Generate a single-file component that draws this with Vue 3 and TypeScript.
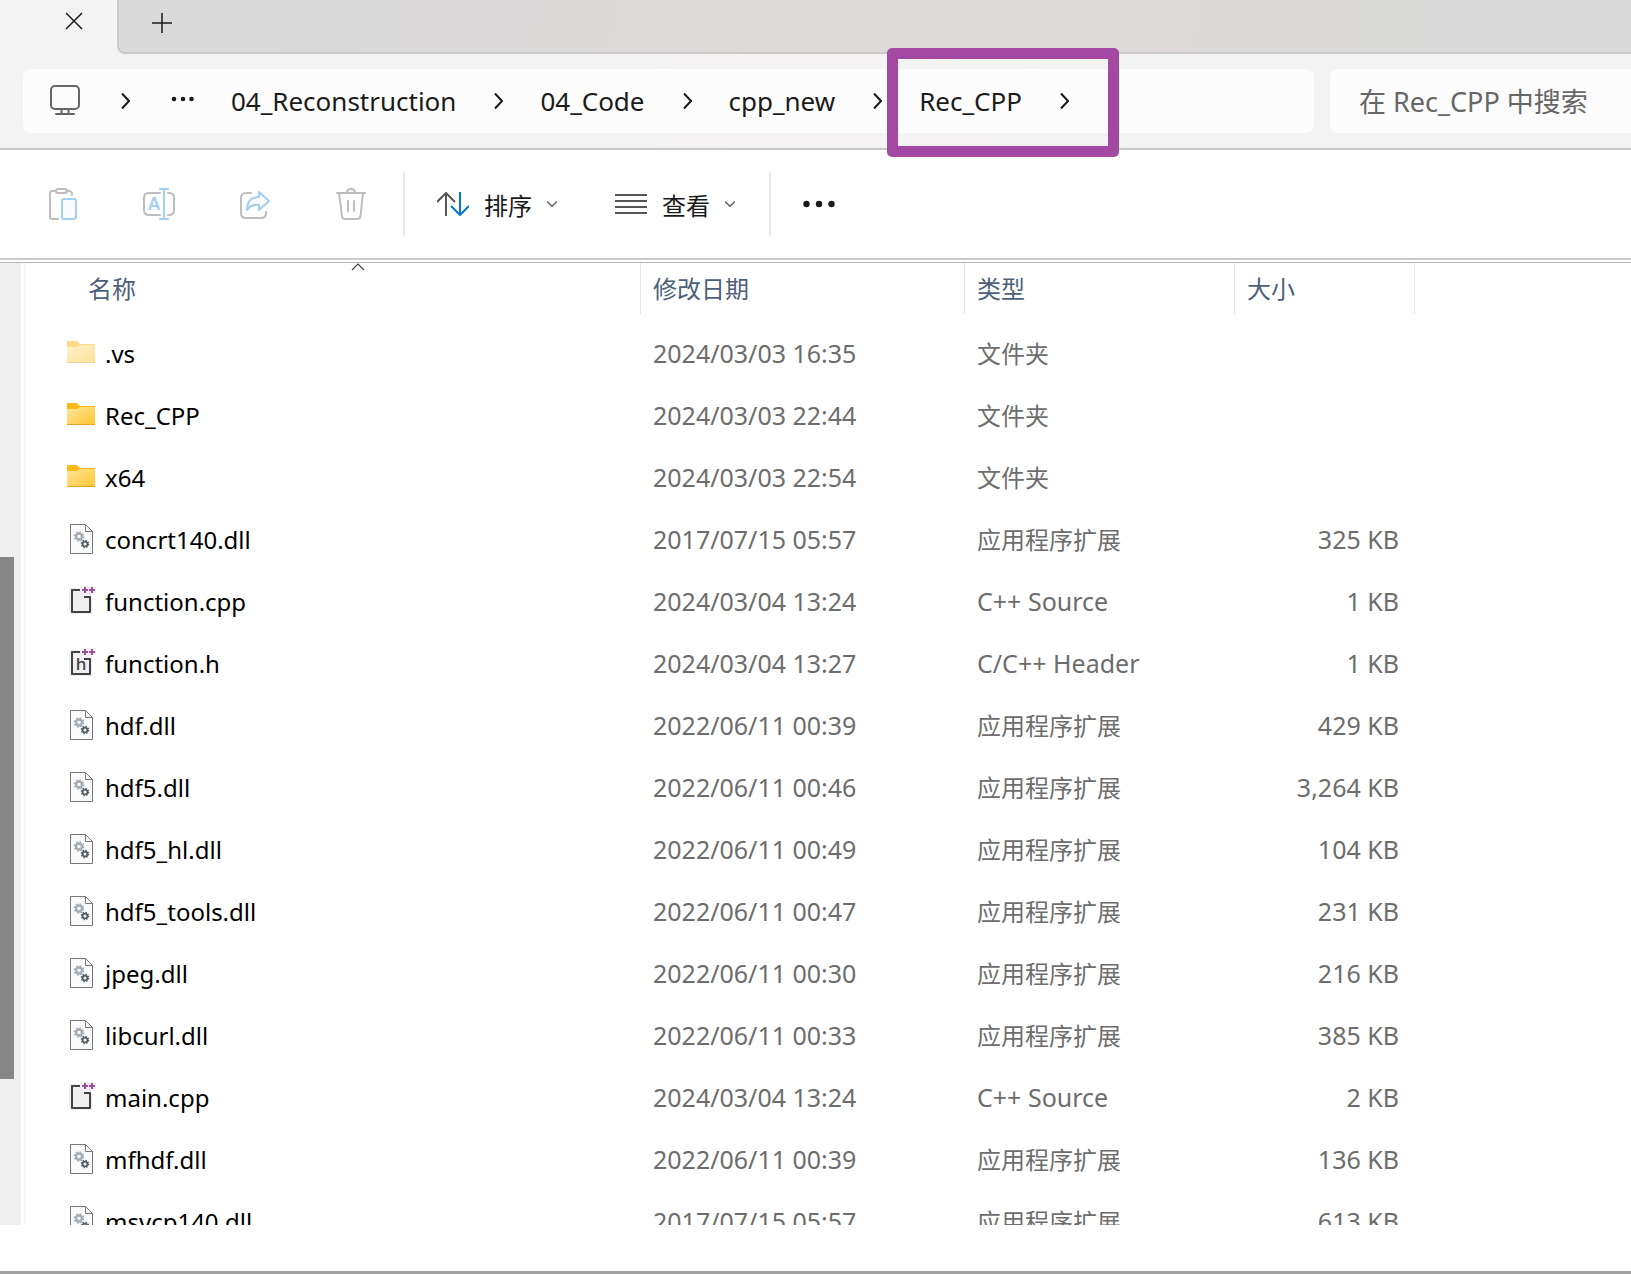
<script setup lang="ts">
type Kind = 'folder-dim' | 'folder' | 'dll' | 'cpp' | 'header'

interface Entry {
  name: string
  date: string
  type: string
  size: string
  kind: Kind
}

const DLL = '应用程序扩展'
const FOLDER = '文件夹'

const crumbs: string[] = ['04_Reconstruction', '04_Code', 'cpp_new', 'Rec_CPP']

const dll = (name: string, date: string, size: string): Entry => ({ name, date, type: DLL, size, kind: 'dll' })

const entries: Entry[] = [
  { name: '.vs', date: '2024/03/03 16:35', type: FOLDER, size: '', kind: 'folder-dim' },
  { name: 'Rec_CPP', date: '2024/03/03 22:44', type: FOLDER, size: '', kind: 'folder' },
  { name: 'x64', date: '2024/03/03 22:54', type: FOLDER, size: '', kind: 'folder' },
  dll('concrt140.dll', '2017/07/15 05:57', '325 KB'),
  { name: 'function.cpp', date: '2024/03/04 13:24', type: 'C++ Source', size: '1 KB', kind: 'cpp' },
  { name: 'function.h', date: '2024/03/04 13:27', type: 'C/C++ Header', size: '1 KB', kind: 'header' },
  dll('hdf.dll', '2022/06/11 00:39', '429 KB'),
  dll('hdf5.dll', '2022/06/11 00:46', '3,264 KB'),
  dll('hdf5_hl.dll', '2022/06/11 00:49', '104 KB'),
  dll('hdf5_tools.dll', '2022/06/11 00:47', '231 KB'),
  dll('jpeg.dll', '2022/06/11 00:30', '216 KB'),
  dll('libcurl.dll', '2022/06/11 00:33', '385 KB'),
  { name: 'main.cpp', date: '2024/03/04 13:24', type: 'C++ Source', size: '2 KB', kind: 'cpp' },
  dll('mfhdf.dll', '2022/06/11 00:39', '136 KB'),
  dll('msvcp140.dll', '2017/07/15 05:57', '613 KB'),
]

const isLatin = (text: string): boolean => /^[A-Z]/.test(text)
</script>

<template>
  <div class="window">
    <header class="tabs">
      <div class="tab">
        <button class="tab-close" aria-label="关闭标签页">
          <svg width="18" height="18" viewBox="0 0 18 18"><path d="M1 1L17 17M17 1L1 17" stroke="#1b1b1b" stroke-width="1.5" /></svg>
        </button>
      </div>
      <div class="strip">
        <button aria-label="添加新标签页">
          <svg width="20" height="20" viewBox="0 0 20 20"><path d="M10 0V20M0 10H20" stroke="#1b1b1b" stroke-width="1.5" /></svg>
        </button>
      </div>
    </header>

    <nav class="nav">
      <ol class="address">
        <li>
          <button aria-label="此电脑">
            <svg width="34" height="32" viewBox="0 0 34 32" fill="none" stroke="#666" stroke-width="2" stroke-linecap="round">
              <rect x="2" y="1" width="28" height="23" rx="4" />
              <path d="M12.500 24V28M19.500 24V28M7 29H25" />
            </svg>
          </button>
          <svg class="chev" width="9" height="18" viewBox="0 0 9 18"><path d="M1 1.500L8 9L1 16.500" /></svg>
        </li>
        <li>
          <button class="more" aria-label="更多路径">
            <svg width="27" height="6" viewBox="1 0 27 6" fill="#1b1b1b"><circle cx="8" cy="3" r="2.300" /><circle cx="17" cy="3" r="2.300" /><circle cx="25.500" cy="3" r="2.300" /></svg>
          </button>
        </li>
        <li v-for="crumb in crumbs" :key="crumb" :class="{ marked: crumb === 'Rec_CPP' }">
          <button>{{ crumb }}</button>
          <svg class="chev" width="9" height="18" viewBox="0 0 9 18"><path d="M1 1.500L8 9L1 16.500" /></svg>
        </li>
      </ol>
      <input class="search" type="text" placeholder="在 Rec_CPP 中搜索" aria-label="在 Rec_CPP 中搜索" />
    </nav>

    <div class="toolbar">
      <button class="tool" aria-label="粘贴">
        <svg width="32" height="32" viewBox="0 0 32 32" fill="none" stroke="#bdbdbd" stroke-width="2" stroke-linecap="round">
          <path d="M11 31H5Q3 31 3 29V5Q3 3 5 3H8M19 3H22Q25 3 25 6V7" />
          <rect x="9" y="1" width="11" height="4" rx="2" />
          <rect x="15" y="11" width="14" height="20" rx="2" fill="#fafafa" stroke="#a3cff0" />
        </svg>
      </button>
      <button class="tool" aria-label="重命名">
        <svg width="32" height="32" viewBox="0 0 32 32" fill="none" stroke="#bdbdbd" stroke-width="2" stroke-linecap="round">
          <path d="M17 5H6Q1 5 1 10V22Q1 27 6 27H17M25 5H26Q31 5 31 10V22Q31 27 26 27H25" />
          <path d="M21 1V31M17 1H25M17 31H25" stroke="#a3cff0" />
          <text class="glyph-a" x="11" y="22" text-anchor="middle">A</text>
        </svg>
      </button>
      <button class="tool" aria-label="共享">
        <svg width="32" height="32" viewBox="0 0 32 32" fill="none" stroke="#bdbdbd" stroke-width="2" stroke-linecap="round" stroke-linejoin="round">
          <path d="M12 5H7Q2 5 2 10V25Q2 30 7 30H22Q27 30 27 25V24" />
          <path d="M20 4L30 13L20 22V17Q12 16 8 22Q8 9 20 9Z" fill="#fafafa" stroke="#a3cff0" />
        </svg>
      </button>
      <button class="tool" aria-label="删除">
        <svg width="32" height="32" viewBox="0 0 32 32" fill="none" stroke="#bdbdbd" stroke-width="2" stroke-linecap="round">
          <path d="M2 5H30M12 4Q12 1 16 1Q20 1 20 4M13 13V23M19 13V23" />
          <path d="M4 5L7 28Q7 31 10 31H22Q25 31 25.500 28L28 5" />
        </svg>
      </button>
      <span class="divider"></span>
      <button class="menu">
        <svg width="32" height="24" viewBox="0 0 32 24" fill="none" stroke-width="2">
          <path d="M9 24V1M0 10L9 1L18 10" stroke="#555" />
          <path d="M23 0V23M14 14L23 23L32 14" stroke="#0078d4" />
        </svg>
        <span>排序</span>
        <svg class="caret" width="10" height="6" viewBox="0 0 10 6"><path d="M0 0.500L5 5.300L10 0.500" /></svg>
      </button>
      <button class="menu">
        <svg width="32" height="20" viewBox="0 0 32 20" stroke="#555" stroke-width="2"><path d="M0 1H32M0 7H32M0 13H32M0 19H32" /></svg>
        <span>查看</span>
        <svg class="caret" width="10" height="6" viewBox="0 0 10 6"><path d="M0 0.500L5 5.300L10 0.500" /></svg>
      </button>
      <span class="divider"></span>
      <button class="dots" aria-label="查看更多">
        <svg width="32" height="8" viewBox="0 0 32 8" fill="#1b1b1b"><circle cx="3.500" cy="4" r="3.200" /><circle cx="16" cy="4" r="3.200" /><circle cx="28.500" cy="4" r="3.200" /></svg>
      </button>
    </div>

    <main class="content">
      <div class="pane"><div class="thumb"></div></div>
      <div class="list">
        <table>
          <colgroup>
            <col class="c-name" /><col class="c-date" /><col class="c-type" /><col class="c-size" />
          </colgroup>
          <thead>
            <tr>
              <th class="name" scope="col" aria-sort="ascending">
                <button>名称</button>
                <svg class="sort" width="14" height="8" viewBox="0 0 14 8"><path d="M1 7L7 1L13 7" fill="none" stroke="#444" stroke-width="1.200" /></svg>
              </th>
              <th scope="col"><button>修改日期</button></th>
              <th scope="col"><button>类型</button></th>
              <th scope="col"><button>大小</button></th>
            </tr>
          </thead>
          <tbody>
            <tr v-for="entry in entries" :key="entry.name">
              <td>
                <div class="file">
                  <svg v-if="entry.kind === 'folder' || entry.kind === 'folder-dim'" :class="{ dim: entry.kind === 'folder-dim' }" width="30" height="32" viewBox="0 0 30 32">
                    <defs>
                      <linearGradient id="folder-face" x1="0" y1="0" x2="1" y2="1">
                        <stop offset="0" stop-color="#ffe59b" /><stop offset="1" stop-color="#ffc62f" />
                      </linearGradient>
                    </defs>
                    <path d="M0 4Q0 3 1 3H9Q10 3 11 4L13 6H27Q28 6 28 7V20H0Z" fill="#fbb917" />
                    <path d="M0 9H10L13 7H28V24Q28 25 27 25H1Q0 25 0 24Z" fill="url(#folder-face)" />
                    <path d="M0 24.500H28" stroke="#e6a423" />
                  </svg>
                  <svg v-else-if="entry.kind === 'dll'" width="30" height="32" viewBox="0 0 30 32" fill="none">
                    <path d="M3.500 0.500H18.500L25.500 7.500V29.500H3.500Z" fill="#fafafa" stroke="#777" />
                    <path d="M18.500 0.500V7.500H25.500" stroke="#777" />
                    <circle cx="12" cy="12.500" r="3" stroke="#a3adb5" stroke-width="2.400" />
                    <circle cx="12" cy="12.500" r="4.600" stroke="#a3adb5" stroke-width="1.400" stroke-dasharray="1.800 1.813" />
                    <circle cx="18" cy="20" r="2.400" stroke="#515c61" stroke-width="1.800" />
                    <circle cx="18" cy="20" r="3.700" stroke="#515c61" stroke-width="1.200" stroke-dasharray="1.450 1.456" />
                  </svg>
                  <svg v-else width="30" height="32" viewBox="0 0 30 32" fill="none">
                    <path d="M2 2H14V0H29V7H25V28H2Z" fill="#efeff2" />
                    <path d="M13 4H5V26H23V11H17" stroke="#424242" stroke-width="2" stroke-linejoin="round" />
                    <path d="M15 4H21M18 1V7M22 4H28M25 1V7" stroke="#9b4f96" stroke-width="2" />
                    <text v-if="entry.kind === 'header'" class="glyph-h" x="14" y="22" text-anchor="middle">h</text>
                  </svg>
                  <span>{{ entry.name }}</span>
                </div>
              </td>
              <td class="latin">{{ entry.date }}</td>
              <td :class="{ latin: isLatin(entry.type) }">{{ entry.type }}</td>
              <td class="latin size">{{ entry.size }}</td>
            </tr>
          </tbody>
        </table>
      </div>
    </main>
    <footer class="foot"></footer>
  </div>
</template>

<style>
body {
  margin: 0;
  background: #fff;
}
</style>

<style scoped>
.window {
  display: flex;
  flex-direction: column;
  height: 100vh;
  overflow: hidden;
  font-family: "Noto Sans", "Noto Sans CJK SC", sans-serif;
  font-size: 24px;
  color: #1b1b1b;
}

button {
  display: flex;
  align-items: center;
  padding: 0;
  border: 0;
  background: none;
  color: inherit;
  font: inherit;
  white-space: nowrap;
}

svg {
  display: block;
  flex: none;
}

.tabs {
  display: flex;
  flex: none;
  height: 54px;
  background: #f3f3f3;
}

.tab {
  display: flex;
  justify-content: flex-end;
  width: 117px;
}

.tab-close {
  height: 42px;
  margin-right: 34px;
}

.strip {
  flex: 1;
  box-sizing: border-box;
  border-left: 2px solid #cbcbcb;
  border-bottom: 2px solid #cbc9c9;
  border-bottom-left-radius: 8px;
  background: linear-gradient(100deg, #d9dad9 0%, #dad9da 15%, #dedad8 45%, #dedad9 62%, #d9dad9 90%);
}

.strip button {
  height: 46px;
  margin-left: 33px;
}

.nav {
  display: flex;
  flex: none;
  gap: 16px;
  padding: 15px 0 15px 23px;
  border-bottom: 2px solid #c9c7c7;
  background: linear-gradient(90deg, #f3f3f3 25%, #f5f3f3 50%, #f3f3f3 85%);
}

.address {
  display: flex;
  flex: 1;
  gap: 37px;
  height: 64px;
  margin: 0;
  padding: 0 0 0 26px;
  border-radius: 8px;
  background: #fcfcfc;
  font-size: 26px;
  list-style: none;
}

.address li {
  display: flex;
  align-items: center;
  gap: 38px;
}

.address .more {
  height: 60px;
  margin-bottom: 4px;
}

.chev {
  fill: none;
  stroke: #1b1b1b;
  stroke-width: 2;
}

.marked {
  position: relative;
}

.marked::after {
  content: "";
  position: absolute;
  inset: -21px -50px -24px -32px;
  border: 11px solid #a349a4;
  border-radius: 5px;
  pointer-events: none;
}

.search {
  box-sizing: border-box;
  width: 301px;
  height: 64px;
  padding: 0 0 0 29px;
  border: 0;
  border-radius: 8px 0 0 8px;
  background: #fcfcfc;
  color: #1b1b1b;
  font: inherit;
  font-size: 27px;
}

.search::placeholder {
  color: #666;
  opacity: 1;
}

.toolbar {
  display: flex;
  flex: none;
  align-items: center;
  height: 108px;
  padding-left: 15px;
  border-bottom: 2px solid #cfcaca;
}

.tool {
  justify-content: center;
  width: 96px;
  height: 64px;
}

.divider {
  width: 2px;
  height: 64px;
  margin-left: 4px;
  background: #eaeaea;
}

.menu {
  gap: 15px;
  height: 64px;
  margin-left: 32px;
}

.menu + .menu {
  margin-left: 58px;
}

.menu + .divider {
  margin-left: 34px;
}

.caret {
  fill: none;
  stroke: #666;
  stroke-width: 1.5;
}

.dots {
  height: 64px;
  margin-left: 32px;
}

.glyph-a {
  fill: #a3cff0;
  stroke: none;
  font-size: 18px;
  font-weight: 600;
}

.glyph-h {
  fill: #424242;
  font-size: 17px;
  font-weight: 500;
}

.content {
  display: flex;
  flex: 1;
  min-height: 0;
  margin-top: 2px;
  border-top: 1px solid #b4b4b4;
}

.pane {
  flex: none;
  width: 21px;
  margin-right: 3px;
  background: #f0f0f0;
}

.thumb {
  width: 14px;
  height: 522px;
  margin-top: 294px;
  background: #868686;
}

.list {
  flex: 1;
  overflow: hidden;
  border-left: 2px solid #f6f6f6;
}

table {
  border-collapse: collapse;
  table-layout: fixed;
  width: 1389px;
}

.c-name {
  width: 615px;
}

.c-date {
  width: 324px;
}

.c-type {
  width: 270px;
}

.c-size {
  width: 180px;
}

th {
  height: 60px;
  padding: 0;
  vertical-align: top;
}

th button {
  box-sizing: border-box;
  width: 100%;
  height: 51px;
  padding: 0 0 2px 12px;
  border-right: 1px solid #e5e5e5;
  color: #4c607a;
  font-weight: 400;
}

.name {
  position: relative;
}

.name button {
  padding-left: 62px;
}

.sort {
  position: absolute;
  top: 0;
  left: 325px;
}

td {
  height: 62px;
  box-sizing: border-box;
  padding: 0 0 0 12px;
  color: #6d6d6d;
  line-height: 32px;
  white-space: nowrap;
}

td:first-child {
  padding-left: 41px;
  color: #000;
}

td.latin {
  padding-bottom: 2px;
  font-size: 25px;
}

td.size {
  padding-right: 16px;
  text-align: right;
}

.file {
  display: flex;
  align-items: center;
  gap: 8px;
}

.dim {
  opacity: 0.5;
}

.foot {
  flex: none;
  height: 46px;
  border-bottom: 3px solid #a0a0a0;
}
</style>
